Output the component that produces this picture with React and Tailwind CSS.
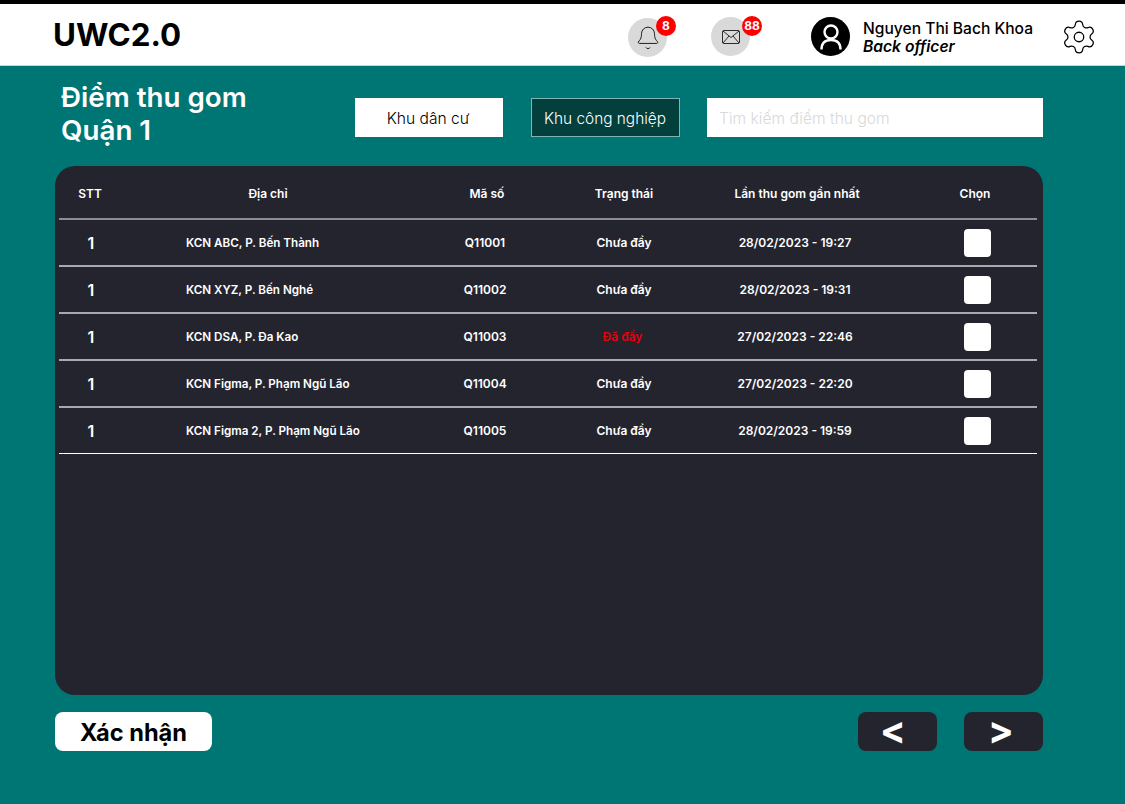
import { Bell, Settings } from 'lucide-react';

const rows = [
  { address: 'KCN ABC, P. Bến Thành', code: 'Q11001', status: 'Chưa đầy', time: '28/02/2023 - 19:27' },
  { address: 'KCN XYZ, P. Bến Nghé', code: 'Q11002', status: 'Chưa đầy', time: '28/02/2023 - 19:31' },
  { address: 'KCN DSA, P. Đa Kao', code: 'Q11003', status: 'Đã đầy', time: '27/02/2023 - 22:46', full: true },
  { address: 'KCN Figma, P. Phạm Ngũ Lão', code: 'Q11004', status: 'Chưa đầy', time: '27/02/2023 - 22:20' },
  { address: 'KCN Figma 2, P. Phạm Ngũ Lão', code: 'Q11005', status: 'Chưa đầy', time: '28/02/2023 - 19:59' },
];

const gridCols = 'grid grid-cols-[62px_294px_144px_130px_216px_1fr] items-center';

const Badge = ({ children, className }) => (
  <span className={`absolute flex h-5 w-5 items-center justify-center rounded-full bg-[#ff0000] text-[12px] font-bold text-white ${className}`}>
    {children}
  </span>
);

const App = () => {
  return (
    <div className="flex h-[804px] w-[1125px] flex-col overflow-hidden bg-[#007674] font-['Inter',sans-serif]">
      <header className="flex h-[66px] items-center border-t-4 border-b border-t-black border-b-[#c9d3d3] bg-white pt-[4px]">
        <h1 className="-mt-[1px] ml-[53px] w-[575px] text-[31.3px] font-bold leading-none text-black">UWC2.0</h1>

        <div className="relative mt-[2px] flex h-[39px] w-[39px] items-center justify-center rounded-full bg-[#d9d9d9]">
          <Bell size={26} strokeWidth={0.8} className="text-black" />
          <Badge className="-right-[9px] -top-[2px]">8</Badge>
        </div>

        <div className="relative ml-[44px] flex h-[39px] w-[39px] items-center justify-center rounded-full bg-[#d9d9d9]">
          <svg width="18" height="14" viewBox="0 0 18 14" fill="none" stroke="black" strokeWidth="0.8">
            <rect x="0.5" y="0.5" width="17" height="13" rx="1.5" />
            <path d="M1 1l8 6.5L17 1M1 13l6-7M17 13l-6-7" />
          </svg>
          <Badge className="-right-[12px] -top-[1px]">88</Badge>
        </div>

        <div className="ml-[61px] flex h-[39px] w-[39px] items-center justify-center rounded-full bg-black">
          <svg width="26" height="30" viewBox="0 0 26 30" fill="none" stroke="white" strokeWidth="2.4">
            <circle cx="13" cy="10" r="6.5" />
            <path d="M3.500 27.500c0-6 3.500-9.500 9.500-9.500s9.500 3.500 9.500 9.500" />
          </svg>
        </div>

        <div className="ml-[13px] flex w-[200px] flex-col pt-[3px] text-black">
          <span className="text-[15.6px] font-medium leading-[18px]">Nguyen Thi Bach Khoa</span>
          <span className="text-[15.6px] font-semibold italic leading-[18px]">Back officer</span>
        </div>

        <Settings size={38} strokeWidth={0.8} className="-ml-[3px] text-black" />
      </header>

      <main className="flex flex-1 flex-col pb-[53px] pl-[55px] pr-[82px] pt-[15px]">
        <section className="flex h-[85px] items-start">
          <h2 className="ml-[6px] w-[294px] text-[27.75px] font-semibold leading-[33px] text-white">
            Điểm thu gom
            <br />
            Quận 1
          </h2>
          <button className="mt-[17px] flex h-[39px] w-[148px] items-center justify-center bg-white pr-[2px] pt-[2px] text-[15.6px] font-light text-black">
            Khu dân cư
          </button>
          <button className="ml-[28px] mt-[17px] flex h-[39px] w-[149px] items-center justify-center border border-[#7fb5b3] bg-[#033f3d] pr-[1px] pt-[2px] text-[15.4px] font-light text-white">
            Khu công nghiệp
          </button>
          <div className="ml-[27px] mt-[17px] flex h-[39px] w-[336px] items-center bg-white pl-[12px] pt-[2px] text-[15.6px] font-light text-[#d9d9d9]">
            Tìm kiếm điểm thu gom
          </div>
        </section>

        <section className="h-[529px] rounded-[20px] bg-[#24242f] pl-[4px] pr-[6px] text-white">
          <div className={`${gridCols} h-[54px] border-b-2 border-[#8c8c94] pt-[3px] text-center text-[12px] font-semibold`}>
            <span>STT</span>
            <span>Địa chỉ</span>
            <span>Mã số</span>
            <span>Trạng thái</span>
            <span>Lần thu gom gần nhất</span>
            <span className="pl-[8px]">Chọn</span>
          </div>
          {rows.map((row, i) => (
            <div
              key={row.code}
              className={`${gridCols} text-[12px] font-semibold ${i < 4 ? 'h-[47px] border-b-2 border-[#a8a8ae]' : 'h-[46px] border-b border-white'}`}
            >
              <span className="pl-[2px] text-center text-[16px]">1</span>
              <span className="pl-[65px] pt-[2px] text-[11.65px]">{row.address}</span>
              <span className="pr-[4px] text-center">{row.code}</span>
              <span className={`text-center ${row.full ? 'pr-[3px] text-[#e8000b]' : ''}`}>{row.status}</span>
              <span className="pr-[4px] text-center">{row.time}</span>
              <span className="flex justify-center pl-[12px]">
                <span className="h-[28px] w-[27px] rounded-[4px] bg-white" />
              </span>
            </div>
          ))}
        </section>

        <footer className="mt-[17px] flex h-[39px] items-stretch">
          <button className="flex w-[157px] items-center justify-center rounded-[8px] bg-white pt-[2px] text-[23.6px] font-bold text-black">
            Xác nhận
          </button>
          <button className="ml-auto flex w-[79px] items-center justify-center rounded-[8px] bg-[#24242f] pb-[4px] pr-[9px] text-[38px] font-bold leading-none text-white">
            &lt;
          </button>
          <button className="ml-[27px] flex w-[79px] items-center justify-center rounded-[8px] bg-[#24242f] pb-[4px] pr-[5px] text-[38px] font-bold leading-none text-white">
            &gt;
          </button>
        </footer>
      </main>
    </div>
  );
};

export default App;
